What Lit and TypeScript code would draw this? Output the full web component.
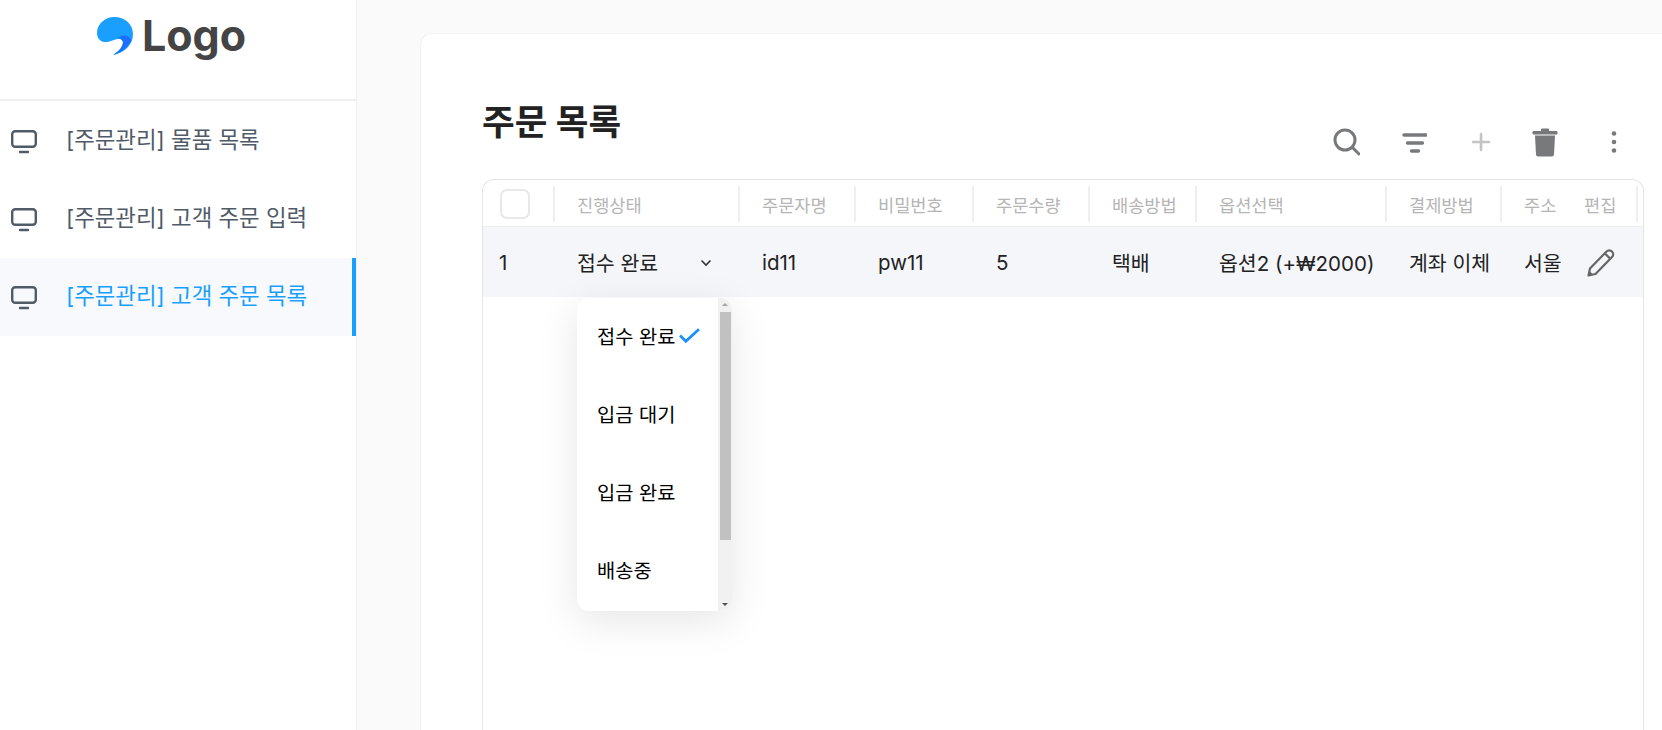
import { LitElement, html, css, svg } from "lit";
import { customElement } from "lit/decorators.js";

const monitor = html`<svg class="mon" width="26" height="24" viewBox="0 0 26 24" fill="none" stroke="currentColor" stroke-width="2.4" stroke-linecap="round"><rect x="1.2" y="1.2" width="23.6" height="15.6" rx="3"/><path d="M9 22h8" /></svg>`;

const cols = [
  ["진행상태", "status"],
  ["주문자명", "id11"],
  ["비밀번호", "pw11"],
  ["주문수량", "5"],
  ["배송방법", "택배"],
  ["옵션선택", "옵션2 (+₩2000)"],
  ["결제방법", "계좌 이체"],
  ["주소", "서울"],
  ["편집", "edit"],
];

@customElement("app-root")
export class AppRoot extends LitElement {
  static styles = css`
    :host {
      display: flex;
      width: 100%;
      height: 730px;
      overflow: hidden;
      background: #fafafa;
      font-family: Inter, "Noto Sans CJK KR", sans-serif;
      color: #222;
    }
    .side {
      width: 356px;
      flex: none;
      background: #fff;
      border-right: 1px solid #f0f0f0;
      display: flex;
      flex-direction: column;
    }
    .logo {
      height: 101px;
      box-sizing: border-box;
      border-bottom: 2px solid #f0f0f0;
      display: flex;
      justify-content: center;
      gap: 9px;
      padding-top: 17px;
      padding-right: 13px;
    }
    .logo span {
      font-size: 43px;
      line-height: 44px;
      font-weight: 700;
      color: #444;
      margin-top: -4px;
    }
    .menu { padding-top: 1px; }
    .item {
      height: 78px;
      box-sizing: border-box;
      display: flex;
      align-items: center;
      gap: 29px;
      padding-left: 11px;
      font-size: 22.4px;
      color: #4f5b67;
    }
    .item span { margin-top: -6px; }
    .item.on {
      color: #1a9fff;
      background: #f7f9fc;
      border-right: 4px solid #1a9fff;
    }
    .mon { color: #4f5b67; flex: none; margin-top: 2px; }
    .main {
      flex: 1;
      min-width: 0;
      padding: 33px 0 0 63px;
      display: flex;
    }
    .card {
      flex: 1;
      min-width: 0;
      box-sizing: border-box;
      background: #fff;
      border: 1px solid #f2f2f2;
      border-width: 1px 0 0 1px;
      border-top-left-radius: 12px;
      padding: 59px 18px 0 61px;
      display: flex;
      flex-direction: column;
    }
    .head {
      display: flex;
      justify-content: space-between;
      align-items: flex-end;
      height: 86px;
      flex: none;
    }
    h1 {
      margin: 0;
      align-self: flex-start;
      font-size: 35.5px;
      line-height: 60px;
      font-weight: 700;
      color: #222;
    }
    .tools {
      display: flex;
      gap: 37px;
      padding: 0 16px 21px 0;
    }
    .tools svg { display: block; width: 30px; height: 32px; }
    .table {
      flex: 1;
      box-sizing: border-box;
      border: 1px solid #e5e5e5;
      border-bottom: 0;
      border-radius: 12px 12px 0 0;
    }
    .row {
      display: grid;
      grid-template-columns: 72px 185px 116px 118px 116px 107px 190px 115px 60px 76px;
    }
    .row.hd { height: 46px; border-bottom: 1px solid #eeeeee; }
    .row.hd .c {
      margin: 6px 0 4px;
      font-size: 17.6px;
      color: #b5b5b5;
      border-right: 2px solid #efefef;
    }
    .row.hd .c.nosep { border-right: 0; }
    .c {
      display: flex;
      align-items: center;
      box-sizing: border-box;
      padding-left: 22px;
      min-width: 0;
      white-space: nowrap;
      position: relative;
    }
    .c.first { padding-left: 17px; }
    .box {
      width: 30px;
      height: 30px;
      box-sizing: border-box;
      border: 2px solid #e8e8e8;
      border-radius: 7px;
      background: #fff;
    }
    .row.bd {
      height: 70px;
      background: #f4f6fa;
      font-size: 20.5px;
      color: #222;
    }
    .row.bd .c.first { padding-left: 16px; }
    .chev { margin: 1px 28px 0 auto; display: block; }
    .pen { display: block; margin: 2px 0 0 2px; }
    .drop {
      position: absolute;
      z-index: 2;
      left: 22px;
      top: calc(100% + 1px);
      width: 155px;
      height: 313px;
      display: flex;
      background: #fff;
      border-radius: 12px;
      overflow: hidden;
      box-shadow: 0 10px 40px rgba(0, 0, 0, 0.1);
      color: #000;
    }
    .opts { flex: 1; padding-left: 20px; min-width: 0; }
    .opt {
      height: 78px;
      box-sizing: border-box;
      padding-bottom: 4px;
      display: flex;
      align-items: center;
      gap: 4px;
      font-size: 19.8px;
    }
    .bar {
      width: 14px;
      flex: none;
      background: #f1f1f1;
      display: flex;
      flex-direction: column;
      align-items: center;
      justify-content: space-between;
      padding: 5px 0;
      box-sizing: border-box;
      position: relative;
    }
    .arrow-u, .arrow-d {
      width: 0;
      height: 0;
      border-left: 3px solid transparent;
      border-right: 3px solid transparent;
    }
    .arrow-u { border-bottom: 3px solid #a3a3a3; }
    .arrow-d { border-top: 3px solid #505050; }
    .thumb {
      position: absolute;
      left: 2px;
      right: 1px;
      top: 14px;
      height: 228px;
      background: #c1c1c1;
    }
  `;

  private tools() {
    return html`<div class="tools">
      <svg viewBox="0 0 30 32" fill="none" stroke="#77797b" stroke-width="3" stroke-linecap="round"><circle cx="15" cy="14" r="10"/><path d="M22.500 21.500l6.500 6.500"/></svg>
      <svg viewBox="0 0 30 32" fill="none" stroke="#77797b" stroke-width="3.400" stroke-linecap="round"><path d="M7 9h22M10.500 17h15M14.500 25h7"/></svg>
      <svg viewBox="0 0 30 32" fill="none" stroke="#c4c4c4" stroke-width="2.600" stroke-linecap="round"><path d="M9 16h16M17 8v16"/></svg>
      <svg viewBox="0 0 30 32" fill="#77797b"><path d="M2 5.500h24v2.500H2zM10.500 3h7v3h-7z" stroke="#77797b" stroke-linejoin="round"/><path d="M4 9.500h20l-1 19c-.1 1.200-1 2-2.200 2H7.200c-1.200 0-2.100-.8-2.200-2z"/></svg>
      <svg viewBox="0 0 30 32" fill="#77797b"><circle cx="16" cy="7.500" r="2.300"/><circle cx="16" cy="16" r="2.300"/><circle cx="16" cy="24.500" r="2.300"/></svg>
    </div>`;
  }

  private body(v: string) {
    if (v === "status") {
      return html`<span>접수 완료</span>
        <svg class="chev" width="12" height="8" viewBox="0 0 12 8" fill="none" stroke="#333" stroke-width="1.600"><path d="M1.500 1.500L6 6l4.500-4.500"/></svg>
        <div class="drop">
          <div class="opts">
            <div class="opt">접수 완료
              <svg width="21" height="15" viewBox="0 0 20 14" fill="none" stroke="#1890ff" stroke-width="2.600"><path d="M1 7l5.500 5.500L19 1"/></svg>
            </div>
            <div class="opt">입금 대기</div>
            <div class="opt">입금 완료</div>
            <div class="opt">배송중</div>
          </div>
          <div class="bar"><i class="arrow-u"></i><i class="thumb"></i><i class="arrow-d"></i></div>
        </div>`;
    }
    if (v === "edit") {
      return html`<svg class="pen" width="30" height="30" viewBox="0 0 30 30" fill="none" stroke="#666" stroke-width="2.200" stroke-linejoin="round"><path d="M2.500 27.500l1.500-7L20.500 3.500c1.600-1.600 4-1.600 5.500 0s1.600 4 0 5.500L9.500 26z"/><path d="M19 5.500l5.500 5.500"/><path d="M2.500 27.500l1-4.500 3.500 3.500z" fill="#666" stroke="none"/></svg>`;
    }
    return v;
  }

  render() {
    return html`
      <aside class="side">
        <div class="logo">
          <svg width="36" height="38" viewBox="0 0 36 38">
            ${svg`<path fill="#1a9fff" d="M17 0C28 0 36 7 36 17C36 28 27 36 16 38C21 35 25 31 26 26C26 22 22 21 17 23C12 25 7 26 4 24C1 22 0 19 0 16C0 7 8 0 17 0Z"/>
            <path fill="#1a6fff" d="M26 18.500C29 18 32 19 34.500 23C31 30 24 36 16 38C21 35 25 31 26 26C26 23 24 21 21 21C23 20 24 19 26 18.500Z"/>`}
          </svg>
          <span>Logo</span>
        </div>
        <nav class="menu">
          <div class="item">${monitor}<span>[주문관리] 물품 목록</span></div>
          <div class="item">${monitor}<span>[주문관리] 고객 주문 입력</span></div>
          <div class="item on">${monitor}<span>[주문관리] 고객 주문 목록</span></div>
        </nav>
      </aside>
      <main class="main">
        <section class="card">
          <div class="head">
            <h1>주문 목록</h1>
            ${this.tools()}
          </div>
          <div class="table">
            <div class="row hd">
              <div class="c first"><div class="box"></div></div>
              ${cols.map(([h], i) => html`<div class="c ${i === 7 ? "nosep" : ""}">${h}</div>`)}
            </div>
            <div class="row bd">
              <div class="c first">1</div>
              ${cols.map(([, v]) => html`<div class="c">${this.body(v)}</div>`)}
            </div>
          </div>
        </section>
      </main>
    `;
  }
}
